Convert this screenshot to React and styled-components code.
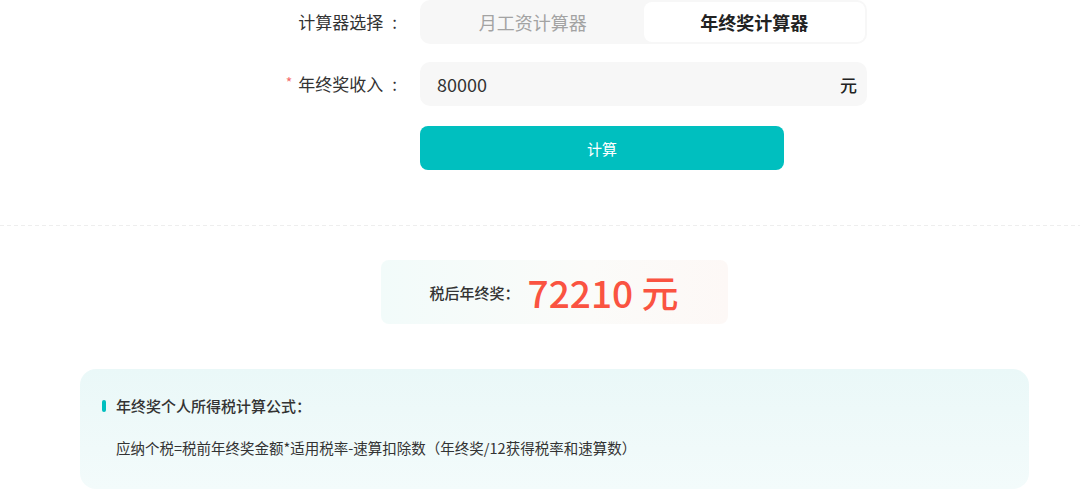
import React, { useState } from "react";
import styled, { createGlobalStyle } from "styled-components";

const Global = createGlobalStyle`
  html, body { margin: 0; padding: 0; background: #fff; }
  body { font-family: "Noto Sans CJK SC", "Noto Sans", sans-serif; color: #333; }
  * { box-sizing: border-box; }
`;

const Page = styled.div`
  width: 1080px;
  height: 491px;
  overflow: hidden;
  background: #fff;
`;

const Content = styled.div`
  width: 949px;
  margin-left: 80px;
`;

const Form = styled.div`
  display: grid;
  grid-template-columns: 320px 447px;
  column-gap: 20px;
  row-gap: 18px;
  align-items: center;
`;

const Label = styled.div`
  display: flex;
  justify-content: flex-end;
  align-items: center;
  padding-right: 3px;
  font-size: 17px;
  line-height: 44px;
  color: #333;
  white-space: nowrap;
`;

const Colon = styled.span`
  margin-left: 9px;
`;

const Star = styled.span`
  color: #f56c6c;
  font-size: 14px;
  margin-right: 6px;
  position: relative;
  top: -2px;
`;

const Segmented = styled.div`
  display: grid;
  grid-template-columns: 1fr 1fr;
  height: 44px;
  padding: 2px;
  background: #f7f7f7;
  border-radius: 10px;
`;

const Tab = styled.button`
  border: none;
  border-radius: 8px;
  font-family: inherit;
  font-size: 18px;
  cursor: pointer;
  background: ${(p) => (p.$active ? "#fff" : "transparent")};
  color: ${(p) => (p.$active ? "#222" : "#a3a3a3")};
  font-weight: ${(p) => (p.$active ? 600 : 400)};
  padding: 0;
`;

const InputBox = styled.div`
  display: flex;
  align-items: center;
  height: 44px;
  padding: 0 10px 0 17px;
  background: #f7f7f7;
  border-radius: 10px;
`;

const Input = styled.input`
  flex: 1;
  border: none;
  background: transparent;
  outline: none;
  font-family: inherit;
  font-size: 18px;
  color: #333;
  padding: 0;
`;

const Unit = styled.span`
  font-size: 17px;
  color: #222;
  font-weight: 500;
`;

const ButtonCell = styled.div`
  grid-column: 2;
  margin-top: 2px;
`;

const CalcButton = styled.button`
  width: 364px;
  height: 44px;
  border: none;
  border-radius: 8px;
  background: #00bfbf;
  color: #fff;
  font-family: inherit;
  font-size: 15px;
  cursor: pointer;
`;

const Divider = styled.div`
  width: 1080px;
  height: 1px;
  margin: 55px 0 0 -80px;
  background: repeating-linear-gradient(90deg, #eeeeee 0 4px, transparent 4px 7px);
`;

const ResultWrap = styled.div`
  display: flex;
  justify-content: center;
  margin-top: 34px;
`;

const ResultBox = styled.div`
  display: flex;
  align-items: center;
  height: 64px;
  padding: 0 50px 0 49px;
  border-radius: 8px;
  background: linear-gradient(90deg, #f2fbfa 0%, #fbfbf9 60%, #fdf8f6 100%);
`;

const ResultLabel = styled.span`
  font-size: 15px;
  color: #333;
  font-weight: 500;
  margin-right: 8px;
`;

const ResultValue = styled.span`
  font-size: 37px;
  color: #fa5341;
  font-weight: 500;
`;

const FormulaBox = styled.div`
  margin-top: 45px;
  height: 120px;
  border-radius: 16px;
  padding: 26px 22px 0;
  background: linear-gradient(180deg, #eaf8f8 0%, #f3fbfb 100%);
`;

const FormulaTitle = styled.div`
  display: flex;
  align-items: center;
  font-size: 15px;
  font-weight: 500;
  color: #333;
  line-height: 22px;
  &::before {
    content: "";
    width: 4px;
    height: 12px;
    border-radius: 2px;
    background: #00bfbf;
    margin-right: 10px;
  }
`;

const FormulaText = styled.div`
  margin-top: 20px;
  padding-left: 14px;
  font-size: 14.5px;
  line-height: 22px;
  color: #333;
`;

export default function App() {
  const [mode, setMode] = useState("bonus");
  const [value, setValue] = useState("80000");
  return (
    <Page>
      <Global />
      <Content>
        <Form>
          <Label>
            计算器选择<Colon>:</Colon>
          </Label>
          <Segmented>
            <Tab $active={mode === "salary"} onClick={() => setMode("salary")}>月工资计算器</Tab>
            <Tab $active={mode === "bonus"} onClick={() => setMode("bonus")}>年终奖计算器</Tab>
          </Segmented>
          <Label>
            <Star>*</Star>年终奖收入<Colon>:</Colon>
          </Label>
          <InputBox>
            <Input value={value} onChange={(e) => setValue(e.target.value)} />
            <Unit>元</Unit>
          </InputBox>
          <ButtonCell>
            <CalcButton>计算</CalcButton>
          </ButtonCell>
        </Form>
        <Divider />
        <ResultWrap>
          <ResultBox>
            <ResultLabel>税后年终奖：</ResultLabel>
            <ResultValue>72210 元</ResultValue>
          </ResultBox>
        </ResultWrap>
        <FormulaBox>
          <FormulaTitle>年终奖个人所得税计算公式：</FormulaTitle>
          <FormulaText>应纳个税=税前年终奖金额*适用税率-速算扣除数（年终奖/12获得税率和速算数）</FormulaText>
        </FormulaBox>
      </Content>
    </Page>
  );
}
